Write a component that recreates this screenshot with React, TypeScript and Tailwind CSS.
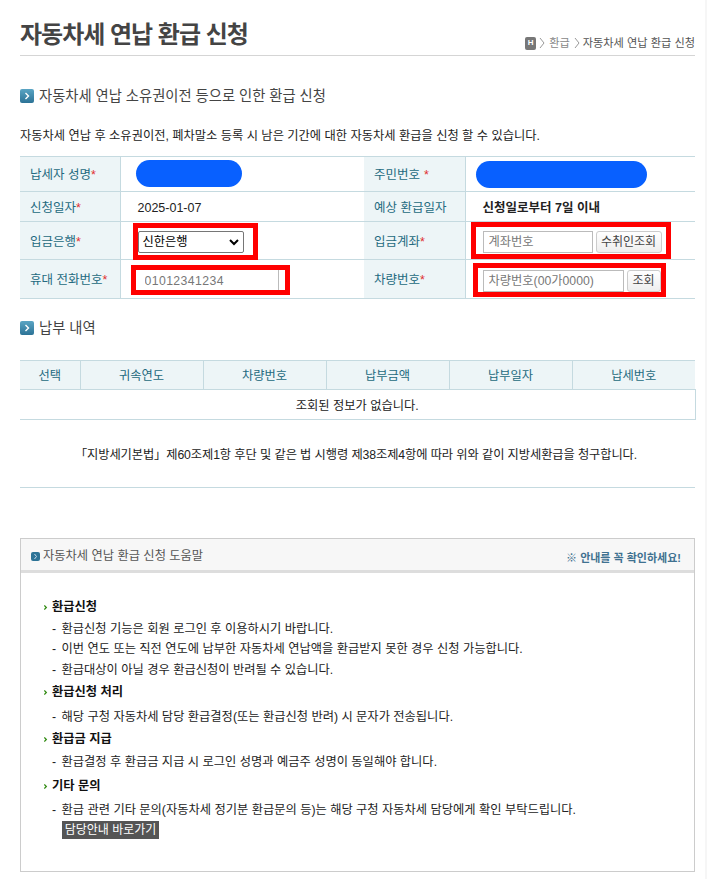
const font = "font-['Liberation_Sans','Noto_Sans_CJK_KR',sans-serif]";

function SectionIcon() {
  return (
    <span className="flex h-[14px] w-[14px] shrink-0 items-center justify-center rounded-[2px] bg-gradient-to-b from-[#5aa5c4] to-[#2c7396]">
      <svg width="8" height="10" viewBox="0 0 8 10" fill="none">
        <path d="M2.5 2l3 3-3 3" stroke="#fff" strokeWidth="1.4" />
      </svg>
    </span>
  );
}

function Crumb() {
  return (
    <svg width="6" height="12" viewBox="0 0 6 12" fill="none" className="shrink-0">
      <path d="M1 1l4 5-4 5" stroke="#999" strokeWidth="1" />
    </svg>
  );
}

function Req({ spaced }: { spaced?: boolean }) {
  return <span className={spaced ? "ml-[4px] text-[#e03030]" : "text-[#e03030]"}>*</span>;
}

function Th({ children }: { children: React.ReactNode }) {
  return (
    <th className="border border-l-0 border-[#c5dae0] bg-[#edf5f7] pt-[3px] pl-[10px] text-left text-[12.5px] font-normal text-[#246a80]">
      {children}
    </th>
  );
}

function Td({ children, className = "" }: { children: React.ReactNode; className?: string }) {
  return (
    <td className={`relative border-y border-[#c5dae0] pt-[3px] pl-[17px] text-[12.5px] text-[#222] ${className}`}>{children}</td>
  );
}

function RedBox({ className }: { className: string }) {
  return <div className={`pointer-events-none absolute border-[5px] border-[#ff0000] ${className}`} />;
}

function HelpHead({ children, className = "" }: { children: React.ReactNode; className?: string }) {
  return (
    <div className={`flex h-[23px] items-center text-[12.25px] font-bold text-[#111] ${className}`}>
      <svg width="8" height="9" viewBox="0 0 8 9" className="shrink-0" fill="none">
        <path d="M0.3 2.5l2 2-2 2" stroke="#2f8a10" strokeWidth="1.3" />
      </svg>
      {children}
    </div>
  );
}

function HelpLine({ children, className = "" }: { children: React.ReactNode; className?: string }) {
  return (
    <p className={`h-[21px] pl-[8px] text-[12.25px] leading-[21px] text-[#222] ${className}`}>
      <span className="mr-[2px]">-</span> {children}
    </p>
  );
}

const cols = ["선택", "귀속연도", "차량번호", "납부금액", "납부일자", "납세번호"];

export default function App() {
  return (
    <div className={`${font} h-[879px] w-[707px] overflow-hidden border-r-2 border-[#f6f6f6] bg-white pr-[10px] pl-[20px]`}>
      <div className="flex h-[56px] items-end justify-between border-b border-[#d5d5d5] pb-[1px]">
        <h1 className="mb-[2px] text-[24px] leading-[34px] font-bold tracking-[-1px] text-[#444]">자동차세 연납 환급 신청</h1>
        <div className="mb-[2px] flex items-center gap-[3px] text-[11.2px] leading-[18px] text-[#555]">
          <span className="flex h-[13px] w-[11px] items-center justify-center rounded-[2px] bg-[#777] text-[8px] font-bold text-white">H</span>
          <Crumb />
          <span className="mx-[1px] text-[#888]">환급</span>
          <Crumb />
          <span>자동차세 연납 환급 신청</span>
        </div>
      </div>

      <div className="mt-[30px] flex items-center gap-[5px]">
        <SectionIcon />
        <h2 className="text-[14.3px] leading-[20px] font-normal text-[#444]">자동차세 연납 소유권이전 등으로 인한 환급 신청</h2>
      </div>
      <p className="mt-[21px] h-[19px] text-[12.25px] leading-[19px] text-[#222]">
        자동차세 연납 후 소유권이전, 폐차말소 등록 시 남은 기간에 대한 자동차세 환급을 신청 할 수 있습니다.
      </p>

      <table className="mt-[10px] w-[675px] table-fixed border-collapse">
        <colgroup>
          <col className="w-[100px]" />
          <col className="w-[244px]" />
          <col className="w-[101px]" />
          <col className="w-[230px]" />
        </colgroup>
        <tbody>
          <tr className="h-[35px]">
            <Th>납세자 성명<Req /></Th>
            <Td>
              <div className="absolute top-[3px] left-[15px] h-[27px] w-[106px] rounded-full bg-[#0860ff]" />
            </Td>
            <Th>주민번호<Req spaced /></Th>
            <Td>
              <div className="absolute top-[4px] left-[10px] h-[27px] w-[171px] rounded-full bg-[#0860ff]" />
            </Td>
          </tr>
          <tr className="h-[30px]">
            <Th>신청일자<Req /></Th>
            <Td>2025-01-07</Td>
            <Th>예상 환급일자</Th>
            <Td className="font-bold">신청일로부터 7일 이내</Td>
          </tr>
          <tr className="h-[38px]">
            <Th>입금은행<Req /></Th>
            <Td>
              <div className="flex h-[22px] w-[106px] items-center justify-between rounded-[2px] border border-[#767676] bg-white pr-[4px] pl-[4px] text-[12.25px] text-black">
                신한은행
                <svg width="10" height="7" viewBox="0 0 10 7" fill="none">
                  <path d="M1 1l4 4 4-4" stroke="#000" strokeWidth="2" />
                </svg>
              </div>
              <RedBox className="top-[1px] left-[12px] h-[37px] w-[125px]" />
            </Td>
            <Th>입금계좌<Req /></Th>
            <Td>
              <div className="flex items-center gap-[3px]">
                <input placeholder="계좌번호" className="h-[22px] w-[110px] border border-[#bbb] px-[5px] text-[12.25px] placeholder:text-[#777]" />
                <button className="h-[22px] w-[66px] rounded-[3px] border border-[#ccc] bg-gradient-to-b from-white to-[#eee] text-[12px] text-[#444]">수취인조회</button>
              </div>
              <RedBox className="top-0 left-[5px] h-[37px] w-[200px]" />
            </Td>
          </tr>
          <tr className="h-[39px]">
            <Th>휴대 전화번호<Req /></Th>
            <Td>
              <input placeholder="01012341234" className="h-[22px] w-[141px] border-r border-[#bbb] px-[7px] text-[12.25px] tracking-[0.4px] placeholder:text-[#777]" />
              <RedBox className="top-[5px] left-[10px] h-[30px] w-[159px]" />
            </Td>
            <Th>차량번호<Req /></Th>
            <Td>
              <div className="flex items-center gap-[3px]">
                <input placeholder="차량번호(00가0000)" className="h-[22px] w-[141px] border border-[#bbb] px-[5px] text-[12.25px] placeholder:text-[#777]" />
                <button className="h-[22px] w-[34px] rounded-[3px] border border-[#ccc] bg-gradient-to-b from-white to-[#eee] text-[12px] text-[#444]">조회</button>
              </div>
              <RedBox className="top-[3px] left-[7px] h-[34px] w-[193px]" />
            </Td>
          </tr>
        </tbody>
      </table>

      <div className="mt-[19px] flex items-center gap-[5px]">
        <SectionIcon />
        <h2 className="text-[14.3px] leading-[20px] font-normal text-[#444]">납부 내역</h2>
      </div>

      <table className="mt-[22px] w-[675px] table-fixed border-collapse">
        <colgroup>
          <col className="w-[60px]" />
          <col className="w-[123px]" />
          <col className="w-[123px]" />
          <col className="w-[123px]" />
          <col className="w-[123px]" />
          <col className="w-[123px]" />
        </colgroup>
        <thead>
          <tr className="h-[29px]">
            {cols.map((c, i) => (
              <th
                key={c}
                className={`border-y border-[#c5dae0] bg-[#edf5f7] pt-[3px] text-center text-[12.25px] font-normal text-[#246a80] ${i > 0 ? "border-l" : ""}`}
              >
                {c}
              </th>
            ))}
          </tr>
        </thead>
        <tbody>
          <tr className="h-[30px]">
            <td colSpan={6} className="border-r border-b border-[#c5dae0] pt-[4px] text-center text-[12.25px] text-[#222]">
              조회된 정보가 없습니다.
            </td>
          </tr>
        </tbody>
      </table>

      <p className="mt-[26px] h-[19px] pr-[3px] text-center text-[12.25px] leading-[19px] tracking-[-0.1px] text-[#222]">
        「지방세기본법」제60조제1항 후단 및 같은 법 시행령 제38조제4항에 따라 위와 같이 지방세환급을 청구합니다.
      </p>
      <div className="mt-[22px] border-b border-[#c5dae0]" />

      <div className="mt-[50px] h-[334px] w-[675px] border border-[#ccc]">
        <div className="flex h-[34px] items-center justify-between border-b-[3px] border-[#ddd] bg-[#f7f7f7] pt-[3px] pr-[13px] pl-[10px]">
          <div className="flex items-center gap-[3px]">
            <span className="flex h-[9px] w-[9px] items-center justify-center rounded-[2px] bg-[#2c7396]">
              <svg width="5" height="7" viewBox="0 0 5 7" fill="none">
                <path d="M1.5 1l2 2.5-2 2.5" stroke="#cde" strokeWidth="1" />
              </svg>
            </span>
            <span className="text-[12.25px] text-[#555]">자동차세 연납 환급 신청 도움말</span>
          </div>
          <span className="mt-[4px] text-[11px] font-bold text-[#3f7190]">※ 안내를 꼭 확인하세요!</span>
        </div>
        <div className="pt-[23px] pl-[23px]">
          <HelpHead>환급신청</HelpHead>
          <HelpLine>환급신청 기능은 회원 로그인 후 이용하시기 바랍니다.</HelpLine>
          <HelpLine className="-mt-[1px]">이번 연도 또는 직전 연도에 납부한 자동차세 연납액을 환급받지 못한 경우 신청 가능합니다.</HelpLine>
          <HelpLine>환급대상이 아닐 경우 환급신청이 반려될 수 있습니다.</HelpLine>
          <HelpHead>환급신청 처리</HelpHead>
          <HelpLine className="mt-[3px]">해당 구청 자동차세 담당 환급결정(또는 환급신청 반려) 시 문자가 전송됩니다.</HelpLine>
          <HelpHead>환급금 지급</HelpHead>
          <HelpLine className="mt-[1px]">환급결정 후 환급금 지급 시 로그인 성명과 예금주 성명이 동일해야 합니다.</HelpLine>
          <HelpHead className="mt-[2px]">기타 문의</HelpHead>
          <HelpLine className="mt-[2px]">환급 관련 기타 문의(자동차세 정기분 환급문의 등)는 해당 구청 자동차세 담당에게 확인 부탁드립니다.</HelpLine>
          <div className="ml-[18px] flex h-[18px] w-[97px] items-center justify-center bg-[#555] text-[12px] text-white">담당안내 바로가기</div>
        </div>
      </div>
    </div>
  );
}
